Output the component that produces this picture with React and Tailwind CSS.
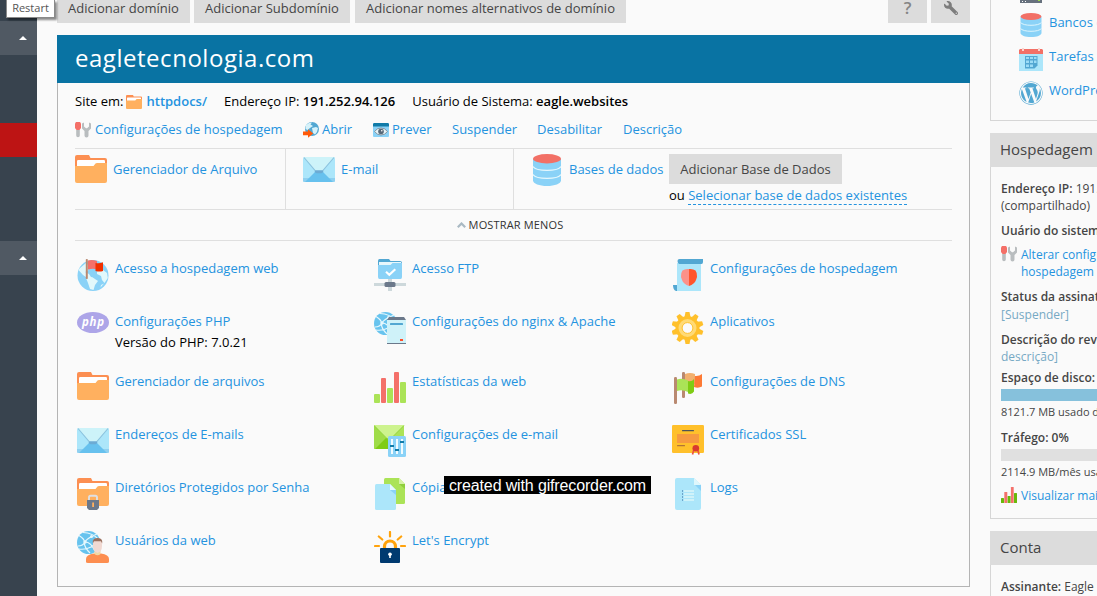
import React from "react";
import { FaWordpress, FaWrench } from "react-icons/fa";

const Svg = ({ w = 32, h = 32, vw = w, vh = h, children, className = "" }) => (
  <svg width={w} height={h} viewBox={`0 0 ${vw} ${vh}`} className={`block shrink-0 ${className}`}>
    {children}
  </svg>
);

const FolderShape = () => (
  <>
    <path d="M0 2a2 2 0 0 1 2-2h12l1.500 3H30a2 2 0 0 1 2 2v10H0z" fill="#fc8f52" />
    <path d="M2 6.200a1.200 1.200 0 0 1 1.200-1.200h25.600a1.200 1.200 0 0 1 1.200 1.200V13H2z" fill="#fff" />
    <path d="M0 11h18.500l2-2.500q.5-.5 1.500-.5h10v18a2 2 0 0 1-2 2H2a2 2 0 0 1-2-2z" fill="#ffb05f" />
  </>
);
const Folder = ({ w = 32, h = 28 }) => (
  <Svg w={w} h={h} vw={32} vh={28}>
    <FolderShape />
  </Svg>
);
const Mail = () => (
  <Svg w={32} h={25}>
    <rect width="32" height="25" rx="1.500" fill="#ace6fa" />
    <path d="M0 21l32 0v2.500a1.500 1.500 0 0 1-1.500 1.500h-29A1.500 1.500 0 0 1 0 23.500z" fill="#8fd0f0" />
    <path d="M2 25L13 14h6l11 11z" fill="#67c1ee" />
    <path d="M1 0h30L19 14.500q-3 2-6 0z" fill="#cdf3f9" />
    <path d="M1 .5L13 14.500q3 1.800 6 0L31 .5" fill="none" stroke="#8dc3de" strokeWidth="1.100" />
    <path d="M12.500 13.200h7l1 1.800-2 1.300h-5l-2-1.300z" fill="#6cabd4" />
  </Svg>
);
const Database = ({ w = 28, h = 32 }) => (
  <Svg w={w} h={h} vw={28} vh={32}>
    <path d="M0 5h28v21.500c0 3-6.300 5.500-14 5.500S0 29.500 0 26.500z" fill="#8ad2f7" />
    <path d="M0 12.500c3 5.200 25 5.200 28 0M0 20.500c3 5.200 25 5.200 28 0" fill="none" stroke="#e6f8fd" strokeWidth="1.200" />
    <ellipse cx="14" cy="4.700" rx="14" ry="4.700" fill="#f27066" />
  </Svg>
);
const Tools = () => (
  <Svg w={16} h={16}>
    <path d="M1 0h4l1 1.500V6L4.500 8h-3L0 6V1.500z" fill="#f47068" />
    <path d="M1.200 8h3.600v5.500a1.800 1.800 0 0 1-3.600 0z" fill="#b9bdbf" />
    <path d="M7 1.500l2-1v4l2 1.700h1l2-1.700V.5l2 1v5L13.500 9v4.500a2 2 0 0 1-4 0V9L7 6.500z" fill="#b9bdbf" />
  </Svg>
);
const OpenIcon = () => (
  <Svg w={16} h={16}>
    <circle cx="9" cy="7" r="7" fill="#52a7d2" />
    <path d="M3 3l3-2 3-.5-1.500 2L10 4 7 6 4.500 8 2.500 7zM9 6l4-1 2 1-1 4-2 2.500L10 11z" fill="#d6f2fa" />
    <path d="M0 9.500h5V7.300l5.200 4.200L5 15.800v-2.600H0z" fill="#ff5a0a" />
  </Svg>
);
const PreviewIcon = () => (
  <Svg w={16} h={14}>
    <rect width="16" height="14" rx="1" fill="#8ad2f7" />
    <path d="M1 0h14l1 1v2.500H0V1z" fill="#117ba8" />
    <path d="M1.500 8.500Q4 5 8 5t6.500 3.500Q12 12 8 12T1.500 8.500z" fill="#e8f5f9" stroke="#7b8a96" strokeWidth=".9" />
    <circle cx="8" cy="8.500" r="2.800" fill="#566878" />
    <circle cx="8.800" cy="7.700" r=".8" fill="#fff" />
  </Svg>
);
const FlagGlobe = () => (
  <Svg>
    <circle cx="16" cy="16.500" r="15.500" fill="#8ad2f7" />
    <path d="M2.500 9.500L9 4l3 3-1 5-3 1 4 2 2 3-3 1.500-5-3.500-4.500-5zM9 19l6-1 6 4-3 4-1.500 5L13 30l-2-6zM20 12l6-1 4 3 .8 5-3.300 5-2.500-3-1-4-4-2zM24 26l3-1.500-3.500 4z" fill="#e2f8fb" />
    <path d="M11 1.500q4-1.200 9 .5v8.500q-4-1.500-9 0z" fill="#f4706a" />
    <path d="M18.500 4q4 .8 7.500-.8V12q-3.500 1-7.500 0z" fill="#f03000" />
    <rect x="8.800" y="0" width="2" height="20" rx=".8" fill="#b98970" />
  </Svg>
);
const Php = () => (
  <Svg w={32} h={21}>
    <ellipse cx="16" cy="10.500" rx="16" ry="10.500" fill="#ada5e8" />
    <text x="16" y="13.800" textAnchor="middle" fill="#fff" fontFamily="Open Sans" fontWeight="700" fontStyle="italic" fontSize="11.500" textLength="22">
      php
    </text>
  </Svg>
);
const NetGlobe = () => (
  <>
    <circle cx="11.500" cy="11.500" r="11.500" fill="#67c3ee" />
    <path d="M2 4.500Q8 8 7.500 12T13 22M6 1.500Q16 2 21 8M1 15Q6 15 8 11T20 3M8 11Q14 11 18 20M2 18q6 1 12-2t7-6" fill="none" stroke="#e6f8fd" strokeWidth="1.200" />
    <circle cx="8" cy="11" r="1.700" fill="#e6f8fd" />
    <circle cx="14.500" cy="5.500" r="1.500" fill="#e6f8fd" />
  </>
);
const LockedFolder = () => (
  <Svg>
    <FolderShape />
    <path d="M12 23v-3.500q0-1.700 1.700-1.700h4.600q1.700 0 1.700 1.700V23" fill="none" stroke="#dfe0e2" strokeWidth="1.900" />
    <path d="M10 22h12v8l-2 2h-8l-2-2z" fill="#6b788a" />
    <rect x="15.200" y="24.500" width="1.800" height="4.500" fill="#ffb05f" />
  </Svg>
);
const WebUser = () => (
  <Svg>
    <NetGlobe />
    <path d="M9 31v-3q0-4.500 8-5.500h7q8 1 8 5.500v2.500q0 1.500-2 1.500H11q-2 0-2-1z" fill="#fd8e50" />
    <path d="M17.500 19h6v4q-3 2.500-6 0z" fill="#f0d8a4" />
    <path d="M16 10q0-2.500 4.500-2.500T25 10v5q0 5.500-4.500 7Q16 20.500 16 15z" fill="#f1d9d2" />
    <path d="M15.800 12.500V10q.7-3 4.700-3t4.700 3v2.500l-1.200-2.200h-7z" fill="#99705f" />
  </Svg>
);
const Ftp = () => (
  <Svg>
    <path d="M4 2q0-2 1.500-2H15l1.500 2H26q2 0 2 2v4H4z" fill="#52a7d2" />
    <rect x="5" y="3" width="22" height="5" fill="#e8f7fc" />
    <path d="M4 6h12.500l2-2H28v14q0 2-1.500 2h-21Q4 20 4 18z" fill="#8ad2f7" />
    <path d="M12 12.700l3.300 3 6-5.500" fill="none" stroke="#fff" strokeWidth="2.200" />
    <path d="M14 20h4v12h-4z" fill="#cdd8db" />
    <path d="M0 24h32v3H0z" fill="#cdd8db" />
    <rect x="10.500" y="23" width="11" height="5" rx="1.500" fill="#6b788a" />
  </Svg>
);
const Nginx = () => (
  <Svg>
    <NetGlobe />
    <path d="M13 8l2-3h15l2 3v24H13z" fill="#6b788a" />
    <path d="M13 8h19v23H13z" fill="#cff2f9" />
    <rect x="16" y="11" width="13" height="2" rx=".6" fill="#52a7d2" />
    <rect x="26" y="27" width="3" height="2" fill="#ff4f2a" />
  </Svg>
);
const Stats = () => (
  <Svg h={31}>
    <rect y="22" width="6" height="9" rx="1" fill="#abe357" />
    <rect x="7" y="6" width="5" height="25" rx="1" fill="#f4706a" />
    <rect x="13" y="16" width="6" height="15" rx="1" fill="#abe357" />
    <rect x="20" y="0" width="5" height="31" rx="1" fill="#f4706a" />
    <rect x="26" y="10" width="6" height="21" rx="1" fill="#abe357" />
  </Svg>
);
const SmallStats = () => (
  <Svg w={16} h={16}>
    <rect y="11" width="3" height="5" rx=".5" fill="#69b90a" />
    <rect x="3.300" y="5" width="3" height="11" rx=".5" fill="#f4706a" />
    <rect x="6.600" y="9" width="3" height="7" rx=".5" fill="#69b90a" />
    <rect x="9.900" y="0" width="2.800" height="16" rx=".5" fill="#f4706a" />
    <rect x="13" y="6" width="3" height="10" rx=".5" fill="#69b90a" />
  </Svg>
);
const MailConfig = () => (
  <Svg>
    <rect width="30" height="24" rx="1" fill="#abe357" />
    <path d="M0 0l13 14L1 24q-1 0-1-1z" fill="#9fdc48" />
    <path d="M1 24l11-11h6l11 11z" fill="#7fcc14" />
    <path d="M0 0h30L15 15.500z" fill="#cdf38e" />
    <path d="M0 .5l13 13h4l13-13" fill="none" stroke="#8fcf3c" strokeWidth=".8" />
    <rect x="14" y="11" width="18" height="21" rx="1.500" fill="#8ad2f7" />
    <path d="M17 14h2v15h-2zM22 14h2v15h-2zM27 14h2v15h-2z" fill="#f1fbfe" />
    <path d="M16 20h4v2h-4zM21 24h4v2h-4zM26 16h4v2h-4z" fill="#117ba8" />
  </Svg>
);
const Copies = () => (
  <Svg>
    <path d="M10 1.500Q10 0 11.500 0H25l6 6v18.500q0 1.500-1.500 1.500H10z" fill="#abe357" />
    <path d="M25 0l6 6h-6z" fill="#d6f3a5" />
    <path d="M25 6h6v5z" fill="#8fcf3c" />
    <path d="M1 7.500Q1 6 2.500 6H16l6 6v18.500q0 1.500-1.500 1.500h-18Q1 32 1 30.500z" fill="#ace6fa" />
    <path d="M16 6l6 6h-6z" fill="#e6f9fd" />
    <path d="M16 12h6v5z" fill="#8ad2f7" />
  </Svg>
);
const LetsEncrypt = () => (
  <Svg>
    <path d="M16 1v4.500M4.800 5.500l3.500 3M27.200 5.500l-3.500 3M1 15h4M31 15h-4" stroke="#ffa30d" strokeWidth="2.200" strokeLinecap="round" />
    <path d="M10.500 18v-2.500a5.500 5.500 0 0 1 11 0V18" fill="none" stroke="#ffa30d" strokeWidth="3.200" />
    <rect x="6" y="17" width="20" height="15" rx="1" fill="#003a70" />
    <circle cx="16" cy="23.200" r="1.800" fill="#fff" />
    <path d="M15.200 23.500h1.600V27h-1.600z" fill="#fff" />
  </Svg>
);
const Hosting = () => (
  <Svg>
    <path d="M1 26h5v6H4q-3-1-3-6z" fill="#52a7d2" />
    <path d="M5 4h24v28H5z" fill="#ace6fa" />
    <path d="M5.500 2Q5.500 0 7.500 0H31v3q0 2-1.500 2H7q-1.500-1-1.500-3z" fill="#52a7d2" />
    <path d="M17 10v17q-5.500-2-7-6L9 18q-.5-4 1.500-6.500Q13 9.500 17 10z" fill="#fb9189" />
    <path d="M17 10v17q5.500-2 7-6l1-3q.5-4-1.500-6.500Q21 9.500 17 10z" fill="#ff552d" />
  </Svg>
);
const Gear = () => (
  <Svg>
    <g transform="translate(15.500 16)">
      {[0, 36, 72, 108, 144, 180, 216, 252, 288, 324].map((a) => (
        <path key={a} d="M-3-11l1-5h4l1 5z" fill="#ffc02b" transform={`rotate(${a})`} />
      ))}
      <circle r="12" fill="#ffc02b" />
      <circle r="7" fill="#fafafa" stroke="#ffda75" strokeWidth="4" />
      <circle r="5.400" fill="#fafafa" stroke="#ffc02b" strokeWidth="1" />
    </g>
  </Svg>
);
const Flags = () => (
  <Svg>
    <rect x="10" y="0" width="3" height="26" rx="1.200" fill="#b98970" />
    <path d="M13 2q5-2 10 0v10q-5-1.500-10 0z" fill="#f2b06e" />
    <path d="M23 4q4 .5 7-2v12.500q-3.500 2-8 .5z" fill="#fd7a35" />
    <rect x="2" y="5" width="3" height="27" rx="1.200" fill="#b98970" />
    <path d="M5 7.500q5-2 11 1V20q-6-3-11-1z" fill="#abe357" />
    <path d="M16 9q4 1 6-2v12.500q-2 3.500-6 2z" fill="#7fcc14" />
  </Svg>
);
const Certificate = () => (
  <Svg>
    <rect width="32" height="28" rx="1.200" fill="#ffc02b" />
    <rect x="10" y="5" width="12" height="1.200" rx=".5" fill="#4e5358" />
    <rect x="5" y="9" width="22" height="9" fill="#f69a40" />
    <rect x="5" y="20" width="8" height="1.200" rx=".5" fill="#b27437" />
    <path d="M22 24l-1.500 5.500M25.500 24l1.500 5.500" stroke="#ed5440" strokeWidth="1.700" />
    <circle cx="23.800" cy="23.200" r="3.300" fill="#d93a2f" />
  </Svg>
);
const Logs = () => (
  <Svg>
    <path d="M3 2q0-2 2-2h17l7 7v23q0 2-2 2H5q-2 0-2-2z" fill="#ace6fa" />
    <path d="M22 0l7 7h-7z" fill="#def7fc" />
    <path d="M23 7h6v6z" fill="#8ad2f7" />
    <path d="M12 12h10v2H12zM12 15h10v2H12zM12 18h10v2H12zM12 21h10v2H12z" fill="#cff2f9" />
    <path d="M10 12h1v2h-1zM10 15h1v2h-1zM10 18h1v2h-1zM10 21h1v2h-1z" fill="#6ba4cb" />
  </Svg>
);
const Calendar = () => (
  <Svg w={24} h={23}>
    <path d="M0 5h24v18H0z" fill="#ace6fa" />
    <path d="M1 1h22l1 1v4H0V2z" fill="#f27066" />
    <path d="M3 0h2v3H3zM19 0h2v3h-2z" fill="#f9d5d0" />
    <path d="M6 8h12.500v9.500L15.500 20.500H6z" fill="#52a7d2" />
    <path d="M7 9h3v2H7zM11 9h3v2h-3zM15 9h2.500v2H15zM7 12.500h3v2.500H7zM11 12.500h3v2.500h-3zM15 12.500h2.500v2.500H15zM7 16.500h3v2.500H7zM11 16.500h3v2.500h-3z" fill="#9bdcf6" />
  </Svg>
);
const Server = () => (
  <Svg w={22} h={3}>
    <rect width="22" height="3" fill="#67717d" />
    <path d="M2 1h1v1H2zM5 1h1v1H5z" fill="#fff" />
    <path d="M18 0h2v1h-2z" fill="#9fdc48" />
  </Svg>
);

const link = "text-[#2493df]";

const Tool = ({ icon, iconTop = "mt-px", label, note }) => (
  <div className="flex items-start">
    <div className={`w-[38px] shrink-0 ${iconTop}`}>{icon}</div>
    <div className="leading-5">
      <div className={link}>{label}</div>
      {note && <div className="mt-px text-black">{note}</div>}
    </div>
  </div>
);

const tools = [
  { icon: <FlagGlobe />, label: "Acesso a hospedagem web" },
  { icon: <Ftp />, label: "Acesso FTP" },
  { icon: <Hosting />, label: "Configurações de hospedagem" },
  { icon: <Php />, label: "Configurações PHP", note: "Versão do PHP: 7.0.21" },
  { icon: <Nginx />, label: "Configurações do nginx & Apache" },
  { icon: <Gear />, label: "Aplicativos" },
  { icon: <Folder />, label: "Gerenciador de arquivos" },
  { icon: <Stats />, label: "Estatísticas da web" },
  { icon: <Flags />, label: "Configurações de DNS" },
  { icon: <Mail />, iconTop: "mt-1", label: "Endereços de E-mails" },
  { icon: <MailConfig />, label: "Configurações de e-mail" },
  { icon: <Certificate />, label: "Certificados SSL" },
  { icon: <LockedFolder />, label: "Diretórios Protegidos por Senha" },
  { icon: <Copies />, label: "Cópia" },
  { icon: <Logs />, label: "Logs" },
  { icon: <WebUser />, label: "Usuários da web" },
  { icon: <LetsEncrypt />, label: "Let's Encrypt" },
];

const Arrow = () => (
  <Svg w={8} h={4}>
    <path d="M0 4l4-4 4 4z" fill="#fff" />
  </Svg>
);

const Sidebar = () => (
  <aside className="flex w-[37px] shrink-0 flex-col bg-[#38434e]">
    <div className="mt-[21px] flex h-[34px] items-center justify-end bg-[#505963] pr-[10px]">
      <Arrow />
    </div>
    <div className="mt-[68px] h-[34px] bg-[#bd1414]" />
    <div className="mt-[84px] flex h-[34px] items-center justify-end bg-[#505963] pr-[10px]">
      <Arrow />
    </div>
  </aside>
);

const TopButton = ({ className, children }) => (
  <button className={`flex h-[23px] items-start justify-center bg-[#dcdcdc] leading-4 ${className}`}>{children}</button>
);

const SideItem = ({ icon, label }) => (
  <div className="flex h-[34px] items-center">
    <div className="flex w-[30px] shrink-0">{icon}</div>
    <span className={`-mt-1 ${link}`}>{label}</span>
  </div>
);

const Details = () => (
  <div className="flex h-[352px] flex-col border-b border-l border-[#d6d6d6] pl-[10px] text-xs text-[#454545]">
    <p className="mt-[13px] leading-[17px]">
      <b className="font-semibold">Endereço IP:</b> 191.252.94.126
      <br />
      (compartilhado)
    </p>
    <p className="mt-2 font-semibold leading-[17px]">Uuário do sistema:</p>
    <div className={`mt-[7px] flex leading-[17px] ${link}`}>
      <div className="w-5 shrink-0">
        <Tools />
      </div>
      <div>
        Alterar configurações
        <br />
        hospedagem
      </div>
    </div>
    <p className="mt-2 leading-[17.500px]">
      <b className="font-semibold">Status da assinatura:</b>
      <br />
      <span className="text-[#76a9c4]">[Suspender]</span>
    </p>
    <p className="mt-2 leading-[17px]">
      <b className="font-semibold">Descrição do revendedor:</b>
      <br />
      <span className="text-[#76a9c4]">descrição]</span>
    </p>
    <p className="mt-1 font-semibold leading-[17px]">Espaço de disco:</p>
    <div className="mt-[3px] h-3 shrink-0 bg-[#86c1dc]" />
    <p className="mb-px mt-[2px] text-[11px] leading-[17px]">8121.7 MB usado de</p>
    <p className="mt-2 font-semibold leading-[17px]">Tráfego: 0%</p>
    <div className="mt-[3px] h-3 shrink-0 bg-[#e0e0e0]" />
    <p className="mt-[2px] text-[11px] leading-[17px]">2114.9 MB/mês usado</p>
    <div className={`mt-[7px] flex leading-[17px] ${link}`}>
      <div className="w-5 shrink-0">
        <SmallStats />
      </div>
      Visualizar mais
    </div>
  </div>
);

const SideHeading = ({ children }) => (
  <h2 className="mt-3 h-[34px] shrink-0 bg-[#dcdcdc] pl-[10px] text-[15px] leading-[33px] text-[#454545]">{children}</h2>
);

const RightColumn = () => (
  <aside className="ml-5 flex w-[107px] shrink-0 flex-col overflow-hidden">
    <div className="h-[121px] border-b border-l border-[#d6d6d6] pl-7">
      <div className="ml-px h-2">
        <Server />
      </div>
      <SideItem icon={<div className="ml-px"><Database w={22} h={24} /></div>} label="Bancos de dados" />
      <SideItem icon={<Calendar />} label="Tarefas agendadas" />
      <SideItem icon={<FaWordpress size={24} color="#52a7d2" className="block" />} label="WordPress" />
    </div>
    <SideHeading>Hospedagem</SideHeading>
    <Details />
    <SideHeading>Conta</SideHeading>
    <div className="h-[31px] border-l border-[#d6d6d6] pl-[10px] pt-[13px] text-xs leading-[17px] text-[#454545]">
      <b className="font-semibold">Assinante:</b> Eagle
    </div>
  </aside>
);

const Panel = () => (
  <section className="flex h-[552px] flex-col">
    <h1 className="h-12 shrink-0 bg-[#0973a3] pl-[18px] text-2xl leading-[46px] tracking-[0.53px] text-white">eagletecnologia.com</h1>
    <div className="flex flex-1 flex-col border-x border-b border-[#b4b4b4] px-[17px]">
      <div className="mt-[9px] flex h-5 items-center text-black">
        <span>Site em:</span>
        <span className="ml-[3px] mr-1">
          <Folder w={16} h={14} />
        </span>
        <span className={`font-semibold ${link}`}>httpdocs/</span>
        <span className="ml-[17px]">
          Endereço IP: <b className="font-semibold">191.252.94.126</b>
        </span>
        <span className="ml-[17px]">
          Usuário de Sistema: <b className="font-semibold">eagle.websites</b>
        </span>
      </div>
      <div className={`mt-2 flex h-5 items-center ${link}`}>
        <Tools />
        <span className="ml-1 w-[208px]">Configurações de hospedagem</span>
        <OpenIcon />
        <span className="ml-[3px] w-[51px]">Abrir</span>
        <PreviewIcon />
        <span className="ml-[3px] w-[60px]">Prever</span>
        <span className="w-[85px]">Suspender</span>
        <span className="w-[86px]">Desabilitar</span>
        <span>Descrição</span>
      </div>
      <div className={`mt-2 flex h-[62px] shrink-0 border-y border-[#dfdfdf] leading-5 ${link}`}>
        <div className="flex w-[211px] border-r border-[#dfdfdf] pt-[6px]">
          <Folder />
          <span className="ml-[6px] mt-1">Gerenciador de Arquivo</span>
        </div>
        <div className="flex w-[228px] border-r border-[#dfdfdf] pl-[17px] pt-2">
          <Mail />
          <span className="ml-[6px] mt-[2px]">E-mail</span>
        </div>
        <div className="flex pl-[19px] pt-[5px]">
          <Database />
          <div className="ml-2">
            <div className="flex h-[30px]">
              <span className="mt-[5px] w-[100px]">Bases de dados</span>
              <button className="h-[30px] w-[173px] bg-[#dcdcdc] text-[#454545]">Adicionar Base de Dados</button>
            </div>
            <div className="ml-[100px] mt-[2px] leading-[18px] text-black">
              ou <span className={`inline-block border-b border-dashed border-[#2493df] ${link}`}>Selecionar base de dados existentes</span>
            </div>
          </div>
        </div>
      </div>
      <div className="flex h-[31px] shrink-0 items-center justify-center border-b border-[#dfdfdf] pr-[7px] text-[11px] tracking-[0.15px] text-[#333]">
        <Svg w={9} h={6} className="mr-[3px]">
          <path d="M.8 5.200L4.500 1.500 8.200 5.200" fill="none" stroke="#a9b9c3" strokeWidth="2.200" />
        </Svg>
        MOSTRAR MENOS
      </div>
      <div className="ml-[2px] mt-[17px] grid grid-cols-[297px_298px_260px] grid-rows-[53px_60px_53px_53px_53px_53px]">
        {tools.map((t, i) => (
          <Tool key={i} {...t} />
        ))}
      </div>
    </div>
  </section>
);

export default function App() {
  return (
    <div className="relative flex h-[596px] w-[1097px] overflow-hidden whitespace-nowrap bg-[#fafafa] font-['Open_Sans','Noto_Sans',sans-serif] text-[13px]">
      <Sidebar />
      <main className="ml-5 w-[913px] shrink-0">
        <div className="mb-3 flex">
          <TopButton className="mr-1 w-[133px] text-[#454545]">Adicionar domínio</TopButton>
          <TopButton className="mr-[5px] w-[156px] text-[#454545]">Adicionar Subdomínio</TopButton>
          <TopButton className="w-[271px] text-[#454545]">Adicionar nomes alternativos de domínio</TopButton>
          <TopButton className="ml-auto mr-1 w-[39px] text-[17px] font-semibold text-[#858585]">?</TopButton>
          <TopButton className="w-[39px] pt-px text-[#7d7d7d]">
            <FaWrench size={14} className="-scale-x-100" />
          </TopButton>
        </div>
        <Panel />
      </main>
      <RightColumn />
      <div className="absolute left-[6px] top-0 h-[18px] w-[49px] border border-t-0 border-[#8a8a8a] bg-white text-center text-[11px] leading-[15px] text-[#555] shadow-[2px_2px_2px_rgba(0,0,0,0.45)]">
        Restart
      </div>
      <div className="absolute left-[444px] top-[476px] h-[18px] w-[207px] bg-black pl-[5px] font-['Liberation_Sans',sans-serif] text-base leading-[19px] tracking-[-0.14px] text-white">
        created with gifrecorder.com
      </div>
    </div>
  );
}
